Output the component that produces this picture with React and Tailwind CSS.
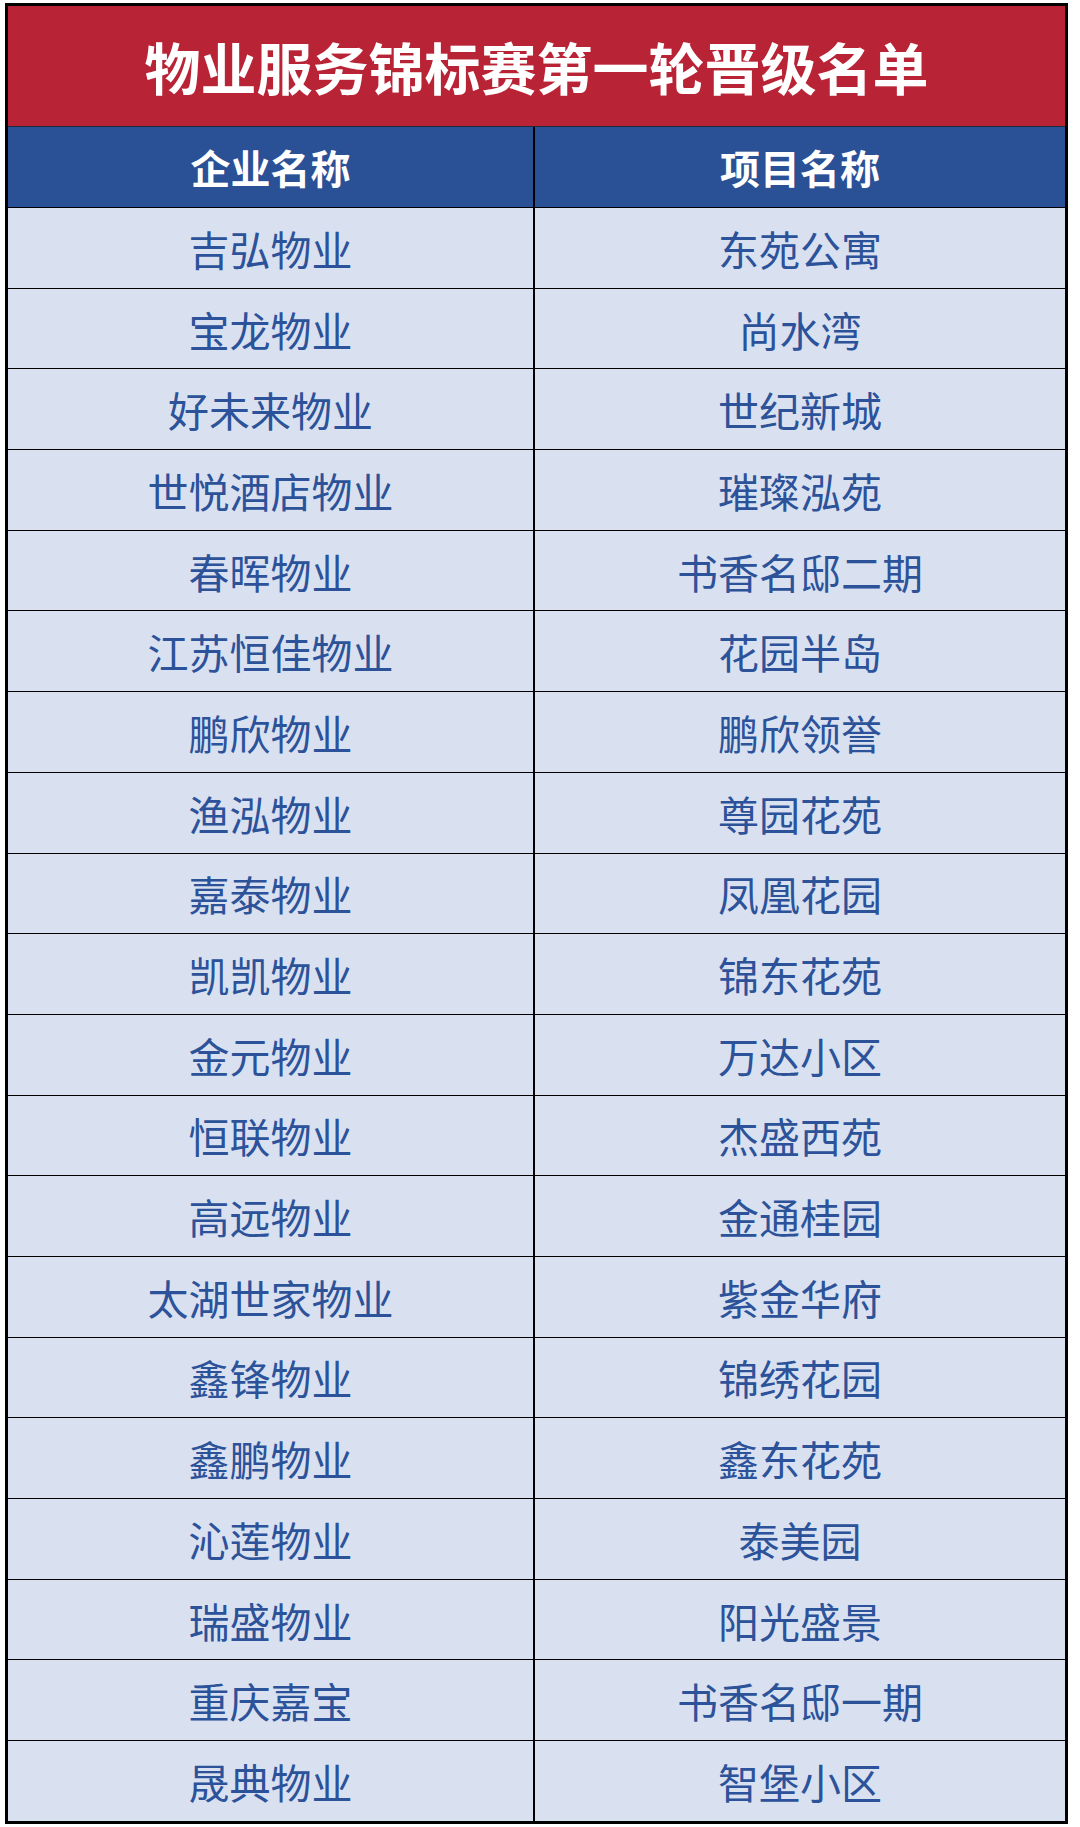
const rows = [
  ["吉弘物业", "东苑公寓"],
  ["宝龙物业", "尚水湾"],
  ["好未来物业", "世纪新城"],
  ["世悦酒店物业", "璀璨泓苑"],
  ["春晖物业", "书香名邸二期"],
  ["江苏恒佳物业", "花园半岛"],
  ["鹏欣物业", "鹏欣领誉"],
  ["渔泓物业", "尊园花苑"],
  ["嘉泰物业", "凤凰花园"],
  ["凯凯物业", "锦东花苑"],
  ["金元物业", "万达小区"],
  ["恒联物业", "杰盛西苑"],
  ["高远物业", "金通桂园"],
  ["太湖世家物业", "紫金华府"],
  ["鑫锋物业", "锦绣花园"],
  ["鑫鹏物业", "鑫东花苑"],
  ["沁莲物业", "泰美园"],
  ["瑞盛物业", "阳光盛景"],
  ["重庆嘉宝", "书香名邸一期"],
  ["晟典物业", "智堡小区"],
];

const font = { fontFamily: '"Noto Sans CJK SC", "Noto Sans", sans-serif' };

export default function App() {
  return (
    <div className="w-[1080px] h-[1827px] bg-white pl-[5px] pt-[3px]" style={font}>
      <div className="w-[1063px] border-[3px] border-black bg-[#d9e1f1]">
        <div className="h-[120px] bg-[#b92336] flex items-center justify-center">
          <h1 className="text-[56px] font-bold text-white leading-none">
            物业服务锦标赛第一轮晋级名单
          </h1>
        </div>
        <div className="h-[81px] bg-[#2a5096] border-t-[1.5px] border-[#1c2a40] grid grid-cols-[527px_1fr]">
          <div className="flex items-center justify-center border-r-2 border-black text-[40px] font-bold text-white leading-none">
            企业名称
          </div>
          <div className="flex items-center justify-center text-[40px] font-bold text-white leading-none">
            项目名称
          </div>
        </div>
        {rows.map(([company, project]) => (
          <div
            key={company}
            className="h-[80.7px] border-t-[1.5px] border-black grid grid-cols-[527px_1fr] text-[41px] text-[#2c5299] leading-none"
          >
            <div className="flex items-center justify-center border-r-2 border-black pt-[1px]">
              {company}
            </div>
            <div className="flex items-center justify-center pt-[1px]">{project}</div>
          </div>
        ))}
      </div>
    </div>
  );
}
